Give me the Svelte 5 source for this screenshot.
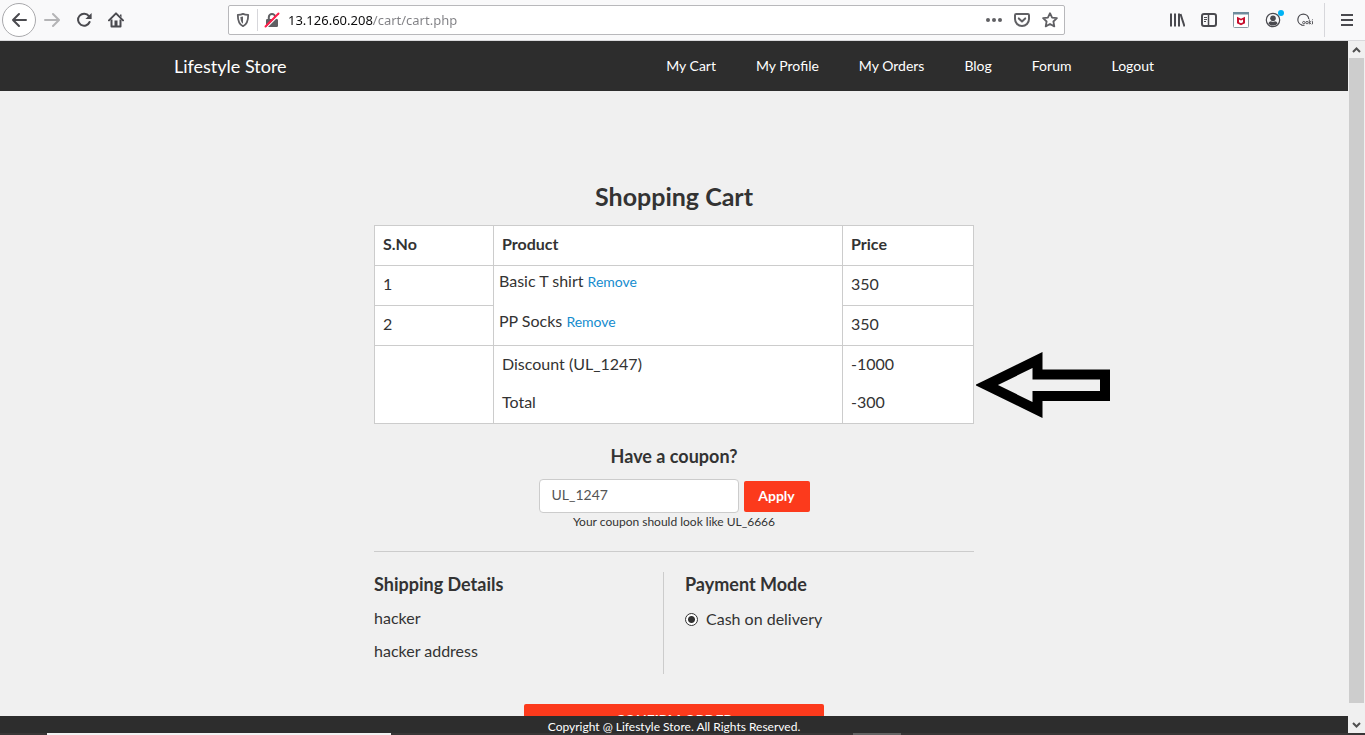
<script lang="ts">
  const links = ['My Cart', 'My Profile', 'My Orders', 'Blog', 'Forum', 'Logout'];
  const items = [
    { no: 1, name: 'Basic T shirt', price: 350 },
    { no: 2, name: 'PP Socks', price: 350 }
  ];
  let address = $state('13.126.60.208/cart/cart.php');
  let coupon = $state('UL_1247');
  let payment = $state('cod');
</script>

<div class="window">
  <div class="toolbar">
    <div class="group">
      <button class="back" aria-label="Back">
        <svg width="16" height="16" viewBox="0 0 16 16"><path d="M15 8H2M8 2L2 8l6 6" fill="none" stroke="#4a4a4f" stroke-width="2" stroke-linecap="round" stroke-linejoin="round" /></svg>
      </button>
      <button class="tool" aria-label="Forward" disabled>
        <svg width="16" height="16" viewBox="0 0 16 16"><path d="M1 8h13M9 2l6 6-6 6" fill="none" stroke="#b4b4b6" stroke-width="2" stroke-linecap="round" stroke-linejoin="round" /></svg>
      </button>
      <button class="tool" aria-label="Reload">
        <svg width="16" height="16" viewBox="0 0 16 16"><path d="M12.9 4.2A6 6 0 1 0 13.6 10" fill="none" stroke="#4a4a4f" stroke-width="2" stroke-linecap="round" /><path d="M15.6 1v6H9.4z" fill="#4a4a4f" /></svg>
      </button>
      <button class="tool" aria-label="Home">
        <svg width="16" height="16" viewBox="0 0 16 16"><path d="M1 8.4L8 1.4l7 7" fill="none" stroke="#4a4a4f" stroke-width="2" stroke-linecap="round" stroke-linejoin="round" /><path d="M3.5 7.5v7h9v-7" fill="none" stroke="#4a4a4f" stroke-width="2" stroke-linejoin="round" /><path d="M6.5 8.5h3V15h-3z" fill="#4a4a4f" /><path d="M12 2.5h1.5v3L12 4z" fill="#4a4a4f" /></svg>
      </button>
    </div>

    <div class="urlbar">
      <button class="small" aria-label="Tracking protection">
        <svg width="16" height="16" viewBox="0 0 16 16"><path d="M8 1.9c1.6.8 3.5 1 5.2 1 0 5.200-.8 9.200-5.200 11.300C3.600 12.100 2.800 8.100 2.800 2.900c1.700 0 3.600-.2 5.200-1z" fill="none" stroke="#606064" stroke-width="1.800" stroke-linejoin="round" /><path d="M8 4.500v7.200C6 10.300 5.500 8 5.400 5c1 0 1.800-.2 2.600-.5z" fill="#606064" /></svg>
      </button>
      <span class="rule"></span>
      <button class="small" aria-label="Connection is not secure">
        <svg width="16" height="16" viewBox="0 0 16 16"><path d="M4.800 8V5.200a3.200 3.200 0 0 1 6.400 0V8" fill="none" stroke="#606064" stroke-width="2" /><rect x="2" y="7" width="12" height="8" rx="1.200" fill="#606064" /><path d="M3 15L14.500 3.500" stroke="#fff" stroke-width="1.500" /><path d="M1.500 14.500L14.500 1.500" stroke="#ff1f4b" stroke-width="2" stroke-linecap="round" /></svg>
      </button>
      <input class="address" aria-label="Address" bind:value={address} />
      <div class="actions">
        <button class="small" aria-label="Page actions">
          <svg width="16" height="16" viewBox="0 0 16 16" fill="#606064"><circle cx="2" cy="8" r="2" /><circle cx="8" cy="8" r="2" /><circle cx="14" cy="8" r="2" /></svg>
        </button>
        <button class="small" aria-label="Save to Pocket">
          <svg width="16" height="16" viewBox="0 0 16 16" fill="none" stroke="#606064" stroke-width="2" stroke-linecap="round" stroke-linejoin="round"><path d="M2.200 2h11.600c.7 0 1.200.5 1.200 1.200v3.900a7 7 0 0 1-14 0V3.200C1 2.500 1.500 2 2.200 2z" /><path d="M4.800 6.400L8 9.400l3.200-3" /></svg>
        </button>
        <button class="small" aria-label="Bookmark">
          <svg width="16" height="16" viewBox="0 0 16 16"><path d="M8 1.200l2.100 4.400 4.800.6-3.500 3.300.9 4.900L8 12l-4.300 2.400.9-4.900L1.100 6.200l4.800-.6z" fill="none" stroke="#606064" stroke-width="1.800" stroke-linejoin="round" /></svg>
        </button>
      </div>
    </div>

    <div class="group">
      <button class="tool" aria-label="Library">
        <svg width="16" height="16" viewBox="0 0 16 16" fill="none" stroke="#4a4a4f" stroke-width="2"><path d="M2 1.500v13M6 1.500v13M10 1.500v13" /><path d="M11.500 2l4 12.500" /></svg>
      </button>
      <button class="tool" aria-label="Sidebars">
        <svg width="16" height="16" viewBox="0 0 16 16" fill="none" stroke="#4a4a4f"><rect x="1" y="2" width="14" height="12" rx="2" stroke-width="2" /><path d="M7.500 2v12" stroke-width="1.500" /><path d="M3 5.500h3M3 7.500h3M3 9.500h2" /></svg>
      </button>
      <button class="tool" aria-label="Site safety">
        <svg width="16" height="16" viewBox="0 0 16 16"><rect x=".5" y=".5" width="15" height="15" rx="1" fill="#fff" stroke="#8a9aa3" /><path d="M0 0h16v2.500H0z" fill="#6f8c9c" /><path d="M4 4.800l4 2 4-2v6.500l-4 2-4-2z" fill="#c8102e" /><path d="M6 7.600l2 1 2-1v2.600l-2 1-2-1z" fill="#fff" /></svg>
      </button>
      <button class="tool account" aria-label="Account">
        <svg width="16" height="16" viewBox="0 0 16 16"><circle cx="8" cy="8" r="6.700" fill="none" stroke="#4a4a4f" stroke-width="1.200" /><circle cx="8" cy="6.200" r="2.800" fill="#4a4a4f" /><path d="M3.400 11.500c.6-1.500 1.600-2.200 2.600-2.200.6.400 1.200.5 2 .5s1.400-.1 2-.5c1 0 2 .7 2.600 2.200A5.600 5.600 0 0 1 8 13.600a5.600 5.600 0 0 1-4.600-2.100z" fill="#4a4a4f" /></svg>
        <span class="dot"></span>
      </button>
      <button class="tool" aria-label="Cookies">
        <svg width="16" height="16" viewBox="0 0 16 16" fill="none" stroke="#4a4a4f"><path d="M5 13A5.500 5.500 0 1 1 11.800 7" stroke-width="1.200" /><path d="M4.500 13.300h3" /><circle cx="6.800" cy="10.600" r="1.200" stroke-width=".9" /><circle cx="10" cy="10.600" r="1.200" stroke-width=".9" /><path d="M12.300 7.500v4.800M14.300 9.200l-1.800 1.300 1.800 1.700M15.500 9.200v3M15.500 7.400v.8" stroke-width=".9" /></svg>
      </button>
      <span class="divider"></span>
      <button class="menu" aria-label="Menu">
        <svg width="16" height="16" viewBox="0 0 16 16"><path d="M2 3h12M2 8h12M2 13h12" stroke="#4a4a4f" stroke-width="2" /></svg>
      </button>
    </div>
  </div>

  <div class="view">
    <div class="page">
      <header>
        <div class="bar">
          <a class="brand" href="#home">Lifestyle Store</a>
          <nav>
            {#each links as link}
              <a href="#{link}">{link}</a>
            {/each}
          </nav>
        </div>
      </header>

      <main>
        <div class="content">
          <h1>Shopping Cart</h1>
          <div class="cart">
            <table>
              <thead>
                <tr><th class="no">S.No</th><th>Product</th><th class="price">Price</th></tr>
              </thead>
              <tbody>
                {#each items as item}
                  <tr class="item">
                    <td>{item.no}</td>
                    <td class="product">{item.name} <a href="#remove">Remove</a></td>
                    <td>{item.price}</td>
                  </tr>
                {/each}
              </tbody>
              <tbody class="sums">
                <tr><td></td><td>Discount (UL_1247)</td><td>-1000</td></tr>
                <tr><td></td><td>Total</td><td>-300</td></tr>
              </tbody>
            </table>
            <svg class="arrow" width="135" height="66" viewBox="0 0 135 66"><path d="M10.500 33L61.500 8v14.500H129v21.500H61.500v14z" fill="none" stroke="#000" stroke-width="10" stroke-miterlimit="10" /></svg>
          </div>

          <form class="coupon" onsubmit={(e) => e.preventDefault()}>
            <h2><label for="coupon">Have a coupon?</label></h2>
            <div class="entry">
              <input id="coupon" bind:value={coupon} />
              <button>Apply</button>
            </div>
            <small>Your coupon should look like UL_6666</small>
          </form>

          <div class="details">
            <section class="shipping">
              <h2>Shipping Details</h2>
              <p>hacker</p>
              <p>hacker address</p>
            </section>
            <section class="payment">
              <h2>Payment Mode</h2>
              <label><input type="radio" name="payment" value="cod" bind:group={payment} />Cash on delivery</label>
            </section>
          </div>

          <button class="confirm">CONFIRM ORDER</button>
        </div>
      </main>
      <footer>Copyright @ Lifestyle Store. All Rights Reserved.</footer>
    </div>

    <div class="scroll">
      <button aria-label="Scroll up"><svg width="9" height="6" viewBox="0 0 9 6"><path d="M1 5l3.500-3.500L8 5" fill="none" stroke="#505050" stroke-width="2" /></svg></button>
      <div class="track"><div class="thumb"></div></div>
      <button aria-label="Scroll down"><svg width="9" height="6" viewBox="0 0 9 6"><path d="M1 1l3.500 3.500L8 1" fill="none" stroke="#505050" stroke-width="2" /></svg></button>
    </div>
  </div>
  <div class="taskbar"><span class="search"></span><span class="task"></span></div>
</div>

<style>
  :global(body) { margin: 0; }
  .window, .window :global(*) { box-sizing: border-box; }
  .window {
    height: 100vh;
    display: flex;
    flex-direction: column;
    overflow: hidden;
    font-family: Lato, sans-serif;
    color: #333;
    background: #f0f0f0;
  }
  button { border: 0; padding: 0; background: none; font-family: inherit; }
  a { text-decoration: none; }
  svg { display: block; flex: none; }

  .toolbar {
    flex: none;
    height: 41px;
    display: flex;
    align-items: center;
    gap: 96px;
    padding-left: 2px;
    background: #f9f9fa;
    border-bottom: 1px solid #d9d9dc;
  }
  .group { display: flex; align-items: center; }
  .back {
    display: grid;
    place-items: center;
    width: 34px;
    height: 34px;
    border: 1px solid #a9a9ac;
    border-radius: 50%;
    background: #fff;
  }
  .tool { display: grid; place-items: center; width: 32px; height: 32px; }
  .account { position: relative; }
  .dot {
    position: absolute;
    top: 6px;
    right: 5px;
    width: 6px;
    height: 6px;
    border-radius: 50%;
    background: #00b3f4;
  }
  .divider { width: 1px; height: 34px; margin: 0 3px; background: #d7d7db; }
  .menu { display: grid; place-items: center; width: 37px; height: 32px; }
  .urlbar {
    flex: 1;
    min-width: 0;
    height: 30px;
    display: flex;
    align-items: center;
    padding: 0 6px;
    background: #fff;
    border: 1px solid #b8b8bb;
    border-radius: 2px;
  }
  .small { display: grid; place-items: center; width: 16px; height: 28px; }
  .rule { width: 1px; height: 22px; margin: 0 6px; background: #d7d7db; }
  .address {
    flex: 1;
    min-width: 0;
    height: 28px;
    margin-left: 8px;
    padding: 0;
    border: 0;
    outline: 0;
    font: 13px "Noto Sans", sans-serif;
    color: transparent;
    background: linear-gradient(to right, #0c0c0d 85px, #808084 85px);
    -webkit-background-clip: text;
    background-clip: text;
    caret-color: #0c0c0d;
  }
  .actions { display: flex; gap: 12px; }

  .view { flex: 1; min-height: 0; display: flex; }
  .page { flex: 1; min-width: 0; display: flex; flex-direction: column; }
  header { flex: none; background: #2d2d2d; }
  .bar {
    max-width: 1000px;
    height: 50px;
    margin: 0 auto;
    display: flex;
    align-items: center;
    justify-content: space-between;
  }
  .bar a { color: #fff; }
  .brand { font-size: 18px; }
  nav { display: flex; }
  nav a { padding: 0 20px; font-size: 14px; line-height: 20px; }

  main { flex: 1; min-height: 0; overflow: hidden; }
  .content { max-width: 600px; margin: 0 auto; padding-top: 90px; text-align: center; }
  h1 { margin: 0 0 14px; font-size: 25px; line-height: 30px; font-weight: 700; }
  h2 { margin: 0; font-size: 18px; line-height: 24px; font-weight: 700; }
  .cart { position: relative; }
  table {
    width: 100%;
    table-layout: fixed;
    border-collapse: collapse;
    background: #fff;
    border: 1px solid #ccc;
    font-size: 16px;
    line-height: 22px;
    text-align: left;
  }
  .no { width: 119px; }
  .price { width: 131px; }
  th, td { height: 40px; padding: 0 8px 3px; border: 1px solid #ccc; }
  .item .product { padding: 0 5px 8px; border-top: 0; border-bottom: 0; }
  .product a { font-size: 14px; color: #158cce; }
  .sums td { height: 39px; border-top: 0; border-bottom: 0; }
  .sums tr:first-child td { border-top: 1px solid #ccc; }
  .arrow { position: absolute; left: 100%; bottom: 6px; margin-left: 2px; }

  .coupon { padding: 20px 0; border-bottom: 1px solid #ccc; }
  .entry { display: flex; align-items: center; justify-content: center; gap: 5px; margin-top: 11px; }
  .entry input {
    width: 200px;
    height: 34px;
    padding: 0 12px 3px;
    border: 1px solid #ccc;
    border-radius: 4px;
    background: #fff;
    color: #555;
    font: 14px Lato, sans-serif;
  }
  .entry button {
    width: 66px;
    height: 31px;
    padding-bottom: 2px;
    border-radius: 2px;
    background: #fc3a1c;
    color: #fff;
    font-size: 14px;
    font-weight: 700;
  }
  small { display: block; font-size: 12px; line-height: 18px; }

  .details { display: flex; margin-top: 20px; text-align: left; }
  .shipping { width: 290px; height: 102px; border-right: 1px solid #ccc; }
  .payment { padding-left: 21px; }
  p { margin: 11px 0 0; font-size: 16px; line-height: 22px; }
  .payment label { display: flex; align-items: center; gap: 8px; margin-top: 11px; font-size: 16px; line-height: 24px; }
  .payment input {
    appearance: none;
    width: 13px;
    height: 13px;
    margin: 0;
    border: 1px solid #333;
    border-radius: 50%;
    background: radial-gradient(circle, #333 3px, #fff 4px);
  }
  .confirm {
    display: block;
    width: 50%;
    margin: 30px auto 0;
    padding: 6px 0 10px;
    border-radius: 2px;
    background: #fc3a1c;
    color: #fff;
    font-size: 14px;
    line-height: 20px;
    font-weight: 700;
  }
  footer {
    flex: none;
    height: 17px;
    padding-top: 2px;
    background: #2d2d2d;
    color: #fff;
    font-size: 12px;
    line-height: 18px;
    text-align: center;
  }

  .scroll { flex: none; width: 17px; display: flex; flex-direction: column; padding: 0 1px; background: #f0f0f0; }
  .scroll button { display: grid; place-items: center; height: 17px; }
  .track { flex: 1; }
  .thumb { height: 98%; background: #cdcdcd; }
  .taskbar { flex: none; display: flex; height: 2px; background: #383636; }
  .search { width: 344px; margin-left: 47px; background: #f2f2f2; }
  .task { width: 48px; margin-left: 462px; background: #636363; }
</style>
